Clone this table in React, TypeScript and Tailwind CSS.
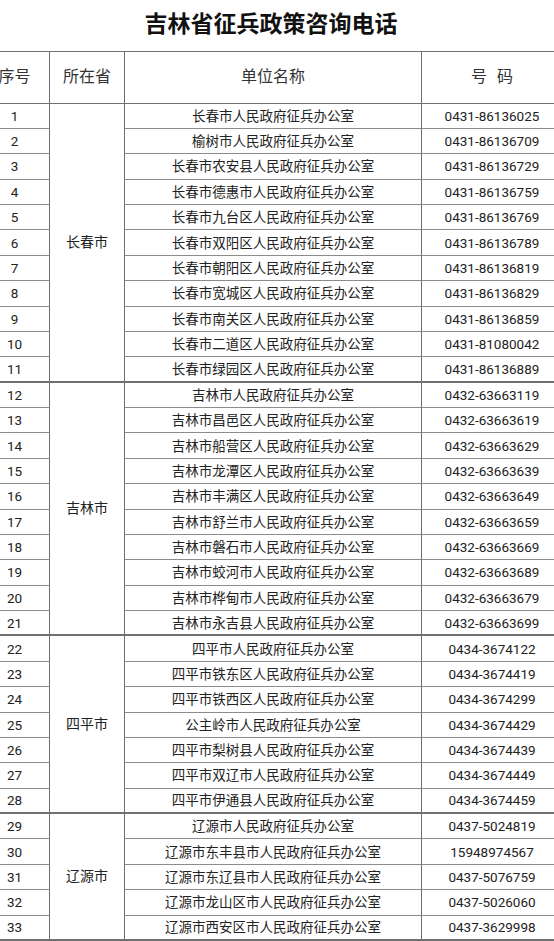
import React from "react";

type Row = [string, string];

const groups: { name: string; span: string; rows: Row[] }[] = [
  {
    name: "长春市",
    span: "row-span-11",
    rows: [
      ["长春市人民政府征兵办公室", "0431-86136025"],
      ["榆树市人民政府征兵办公室", "0431-86136709"],
      ["长春市农安县人民政府征兵办公室", "0431-86136729"],
      ["长春市德惠市人民政府征兵办公室", "0431-86136759"],
      ["长春市九台区人民政府征兵办公室", "0431-86136769"],
      ["长春市双阳区人民政府征兵办公室", "0431-86136789"],
      ["长春市朝阳区人民政府征兵办公室", "0431-86136819"],
      ["长春市宽城区人民政府征兵办公室", "0431-86136829"],
      ["长春市南关区人民政府征兵办公室", "0431-86136859"],
      ["长春市二道区人民政府征兵办公室", "0431-81080042"],
      ["长春市绿园区人民政府征兵办公室", "0431-86136889"],
    ],
  },
  {
    name: "吉林市",
    span: "row-span-10",
    rows: [
      ["吉林市人民政府征兵办公室", "0432-63663119"],
      ["吉林市昌邑区人民政府征兵办公室", "0432-63663619"],
      ["吉林市船营区人民政府征兵办公室", "0432-63663629"],
      ["吉林市龙潭区人民政府征兵办公室", "0432-63663639"],
      ["吉林市丰满区人民政府征兵办公室", "0432-63663649"],
      ["吉林市舒兰市人民政府征兵办公室", "0432-63663659"],
      ["吉林市磐石市人民政府征兵办公室", "0432-63663669"],
      ["吉林市蛟河市人民政府征兵办公室", "0432-63663689"],
      ["吉林市桦甸市人民政府征兵办公室", "0432-63663679"],
      ["吉林市永吉县人民政府征兵办公室", "0432-63663699"],
    ],
  },
  {
    name: "四平市",
    span: "row-span-7",
    rows: [
      ["四平市人民政府征兵办公室", "0434-3674122"],
      ["四平市铁东区人民政府征兵办公室", "0434-3674419"],
      ["四平市铁西区人民政府征兵办公室", "0434-3674299"],
      ["公主岭市人民政府征兵办公室", "0434-3674429"],
      ["四平市梨树县人民政府征兵办公室", "0434-3674439"],
      ["四平市双辽市人民政府征兵办公室", "0434-3674449"],
      ["四平市伊通县人民政府征兵办公室", "0434-3674459"],
    ],
  },
  {
    name: "辽源市",
    span: "row-span-5",
    rows: [
      ["辽源市人民政府征兵办公室", "0437-5024819"],
      ["辽源市东丰县市人民政府征兵办公室", "15948974567"],
      ["辽源市东辽县市人民政府征兵办公室", "0437-5076759"],
      ["辽源市龙山区市人民政府征兵办公室", "0437-5026060"],
      ["辽源市西安区市人民政府征兵办公室", "0437-3629998"],
    ],
  },
];

export default function App() {
  let n = 0;
  const cells: React.ReactNode[] = [];
  groups.forEach((g, gi) => {
    g.rows.forEach((r, ri) => {
      n += 1;
      const last = ri === g.rows.length - 1;
      const bb = last ? "border-b-2 border-b-[#6f6f6f]" : "border-b border-b-[#8c8c8c]";
      cells.push(
        <div key={`n${n}`} className={`col-start-1 flex items-center justify-center border-r border-r-[#6f6f6f] ${bb}`}>
          {n}
        </div>
      );
      if (ri === 0) {
        cells.push(
          <div
            key={`g${gi}`}
            className={`col-start-2 ${g.span} flex items-center justify-center border-r border-r-[#6f6f6f] border-b-2 border-b-[#6f6f6f] text-[14px]`}
          >
            {g.name}
          </div>
        );
      }
      cells.push(
        <div key={`a${n}`} className={`col-start-3 flex items-center justify-center border-r border-r-[#6f6f6f] ${bb}`}>
          {r[0]}
        </div>
      );
      cells.push(
        <div key={`p${n}`} className={`col-start-4 flex items-center justify-center ${bb}`}>
          {r[1]}
        </div>
      );
    });
  });

  return (
    <div
      className="w-[554px] h-[941px] overflow-hidden bg-white text-[#222]"
      style={{ fontFamily: 'Roboto, "Noto Sans CJK SC", sans-serif' }}
    >
      <div className="ml-[-20px] w-[582px]">
        <div className="h-[51px] flex items-center justify-center pb-[3px]">
          <h1 className="text-[23px] font-bold text-[#111] leading-none">吉林省征兵政策咨询电话</h1>
        </div>
        <div className="grid grid-cols-[70px_75px_297px_140px] grid-rows-[51.6px_repeat(33,25.38px)] border-t border-t-[#6f6f6f] text-[13.5px]">
          <div className="flex items-center justify-center border-r border-r-[#6f6f6f] border-b border-b-[#6f6f6f] text-[16px] text-[#333]">
            序号
          </div>
          <div className="flex items-center justify-center border-r border-r-[#6f6f6f] border-b border-b-[#6f6f6f] text-[16px] text-[#333]">
            所在省
          </div>
          <div className="flex items-center justify-center border-r border-r-[#6f6f6f] border-b border-b-[#6f6f6f] text-[16px] text-[#333]">
            单位名称
          </div>
          <div className="flex items-center justify-center gap-[10px] border-b border-b-[#6f6f6f] text-[16px] text-[#333]">
            <span>号</span>
            <span>码</span>
          </div>
          {cells}
        </div>
      </div>
    </div>
  );
}
